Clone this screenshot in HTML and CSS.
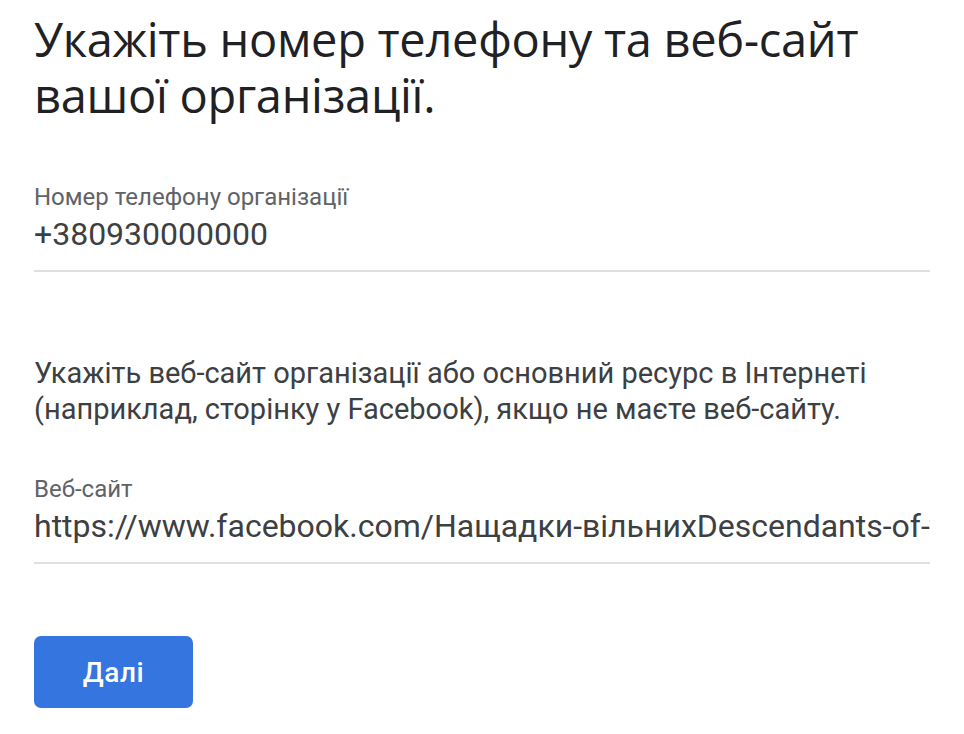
FILE: index.html
```html
<!DOCTYPE html>
<html lang="uk">
<head>
<meta charset="utf-8">
<link rel="stylesheet" href="styles.css">
</head>
<body>
<main class="page">
  <h1 class="title">Укажіть номер телефону та веб-сайт вашої організації.</h1>
  <label class="field field-phone">
    <span class="label">Номер телефону організації</span>
    <input class="value" type="text" value="+380930000000" readonly>
  </label>
  <p class="hint">Укажіть веб-сайт організації або основний ресурс в Інтернеті (наприклад, сторінку у Facebook), якщо не маєте веб-сайту.</p>
  <label class="field field-site">
    <span class="label">Веб-сайт</span>
    <input class="value" type="text" value="https://www.facebook.com/Нащадки-вільнихDescendants-of-the-free" readonly>
  </label>
  <button class="next" type="button">Далі</button>
</main>
</body>
</html>
```

FILE: styles.css
```css
html, body {
  margin: 0;
  padding: 0;
  background: #ffffff;
}
.page {
  width: 896px;
  padding: 11px 0 0 34px;
  display: flex;
  flex-direction: column;
  align-items: flex-start;
}
.title {
  margin: 0;
  font-family: "Open Sans", sans-serif;
  font-weight: 400;
  font-size: 47px;
  line-height: 56px;
  color: #202124;
  letter-spacing: -0.3px;
}
.field {
  display: flex;
  flex-direction: column;
  width: 100%;
  border-bottom: 2px solid #e0e0e0;
  font-family: Roboto, sans-serif;
  padding-bottom: 16px;
}
.field-phone { margin-top: 60px; }
.field-site { margin-top: 48px; }
.label {
  font-size: 24px;
  line-height: 28px;
  color: #5f6368;
}
.value {
  display: block;
  margin: 3px 0 0;
  padding: 0;
  border: none;
  outline: none;
  background: transparent;
  width: 100%;
  height: 40px;
  font-family: Roboto, sans-serif;
  font-size: 32px;
  line-height: 40px;
  color: #3c4043;
}
.hint {
  margin: 83px 0 0;
  font-family: Roboto, sans-serif;
  font-size: 29px;
  line-height: 36px;
  color: #3c4043;
}
.next {
  margin-top: 72px;
  width: 159px;
  height: 72px;
  border: none;
  border-radius: 7px;
  background: #3575e0;
  color: #ffffff;
  font-family: Roboto, sans-serif;
  font-weight: 500;
  font-size: 28px;
  letter-spacing: 0.6px;
  cursor: pointer;
}
```
